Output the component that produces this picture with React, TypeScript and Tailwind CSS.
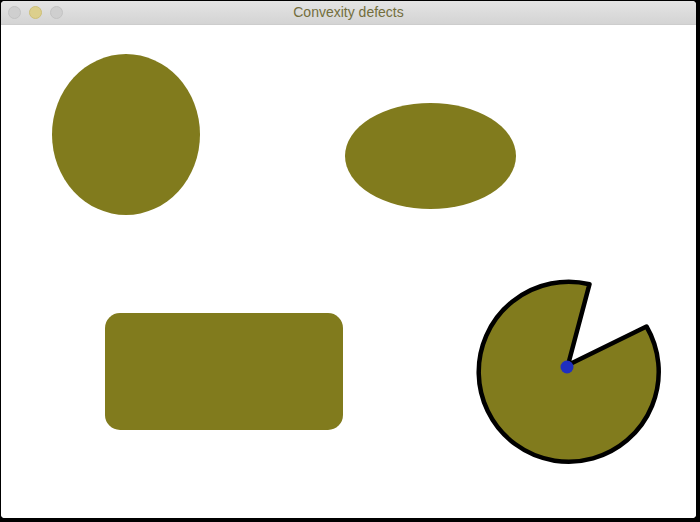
import React from "react";

const OLIVE = "#817b1d";

const TitleBar: React.FC = () => (
  <div className="relative flex h-[24px] items-center bg-gradient-to-b from-[#e4e4e4] to-[#d4d4d4] border-b border-[#cdcdcd]">
    {/* traffic lights (inactive window) */}
    <div className="flex items-center gap-[8px] pl-[7px]">
      <span className="h-[13px] w-[13px] rounded-full bg-[#cfcfcf] border border-[#c3c3c3]" />
      <span className="h-[13px] w-[13px] rounded-full bg-[#dccf8c] border border-[#cdbf78]" />
      <span className="h-[13px] w-[13px] rounded-full bg-[#cfcfcf] border border-[#c3c3c3]" />
    </div>
    <div className="absolute inset-0 flex items-center justify-center pointer-events-none">
      <span className="text-[14px] text-[#736e3c] font-['Liberation_Sans',Arial,sans-serif]">
        Convexity defects
      </span>
    </div>
  </div>
);

// shapes drawn in screen coordinates (canvas starts at x=1, y=25)
const Canvas: React.FC = () => (
  <svg className="block h-full w-full" viewBox="1 25 695 493" preserveAspectRatio="none">
    <rect x="1" y="25" width="695" height="493" fill="#ffffff" />
    <ellipse cx="126" cy="134.5" rx="74" ry="80.5" fill={OLIVE} />
    <ellipse cx="430.5" cy="156" rx="85.5" ry="53" fill={OLIVE} />
    <rect x="105" y="313" width="238" height="117" rx="15" ry="15" fill={OLIVE} />
    {/* pac-man: circle centre (569,372), r 90, wedge cut to the defect point */}
    <path
      d="M 589.5 284.2 L 568 365 L 646.5 326.5 A 90 90 0 1 1 589.5 284.2 Z"
      fill={OLIVE}
      stroke="#000000"
      strokeWidth="4.5"
      strokeLinejoin="round"
    />
    <circle cx="567" cy="367" r="6.5" fill="#1f2fc0" />
  </svg>
);

const App: React.FC = () => {
  return (
    <div className="h-[522px] w-[700px] bg-black pt-px pl-px pr-[4px] pb-[4px]">
      <div className="flex h-full w-full flex-col overflow-hidden rounded-[4px] bg-white">
        <TitleBar />
        <div className="flex-1 min-h-0">
          <Canvas />
        </div>
      </div>
    </div>
  );
};

export default App;
